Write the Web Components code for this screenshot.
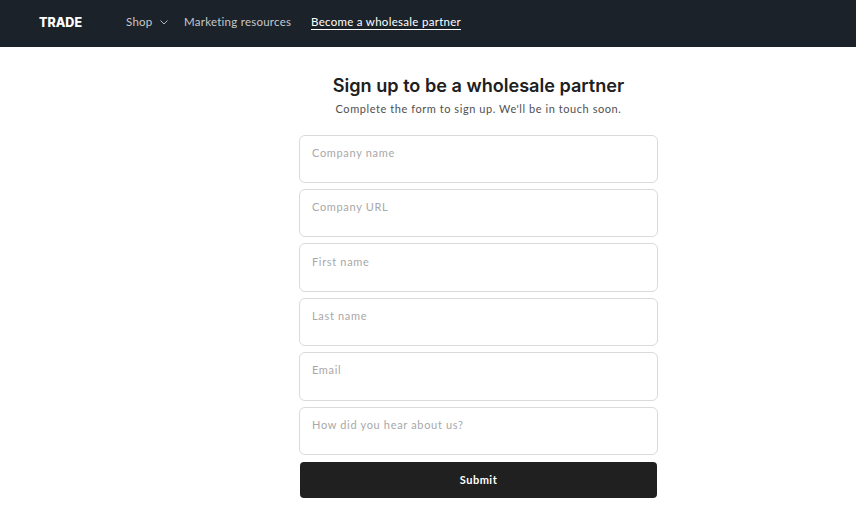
<!DOCTYPE html>
<html>
<head>
<meta charset="utf-8">
<title>Trade</title>
<style>
    html, body { margin: 0; padding: 0; background: #fff; }
    body { font-family: "Lato", "Liberation Sans", sans-serif; color: #202020; }
</style>
</head>
<body>
<trade-header></trade-header>
<signup-form></signup-form>

<script>
class TradeHeader extends HTMLElement {
    constructor() {
        super();
        this.attachShadow({ mode: 'open' });
    }

    connectedCallback() {
        this.shadowRoot.innerHTML = `
            <style>
                :host {
                    display: flex;
                    align-items: center;
                    box-sizing: border-box;
                    height: 47px;
                    padding-left: 39px;
                    padding-bottom: 2px;
                    background: #1c2229;
                    font-size: 11.5px;
                    letter-spacing: 0.25px;
                }
                .logo {
                    width: 87px;
                    color: #fff;
                    font-family: "Inter", sans-serif;
                    font-size: 12.5px;
                    font-weight: 800;
                    letter-spacing: 0;
                }
                nav { display: flex; align-items: baseline; }
                a { color: #c6c8ca; text-decoration: none; }
                .shop { display: flex; align-items: center; width: 58px; }
                .shop svg { margin-left: 7px; margin-top: 2px; }
                .market { width: 127px; }
                .current {
                    color: #fff;
                    letter-spacing: 0.29px;
                    border-bottom: 1px solid #fff;
                    line-height: 13px;
                    padding-bottom: 1px;
                }
            </style>
            <span class="logo">TRADE</span>
            <nav>
                <a class="shop" href="#">Shop
                    <svg width="8" height="5" viewBox="0 0 8 5" fill="none" stroke="#c6c8ca" stroke-width="0.9"><path d="M0.5 0.5 L4 4 L7.5 0.5"/></svg>
                </a>
                <a class="market" href="#">Marketing resources</a>
                <a class="current" href="#">Become a wholesale partner</a>
            </nav>
        `;
    }
}

class SignupField extends HTMLElement {
    constructor() {
        super();
        this.attachShadow({ mode: 'open' });
    }

    connectedCallback() {
        this.shadowRoot.innerHTML = `
            <style>
                :host {
                    display: block;
                    box-sizing: border-box;
                    height: 48.4px;
                    padding: 9.2px 12px 0;
                    border: 1px solid #dadada;
                    border-radius: 6px;
                    background: #fff;
                    color: #a8a8a8;
                    font-size: 11px;
                    line-height: 15px;
                    letter-spacing: 0.67px;
                }
            </style>
            <slot></slot>
        `;
    }
}

class SignupForm extends HTMLElement {
    constructor() {
        super();
        this.attachShadow({ mode: 'open' });
    }

    connectedCallback() {
        const labels = ['Company name', 'Company URL', 'First name', 'Last name', 'Email', 'How did you hear about us?'];
        this.shadowRoot.innerHTML = `
            <style>
                :host {
                    display: flex;
                    flex-direction: column;
                    align-items: center;
                    padding-left: 101px;
                }
                h1 {
                    margin: 27px 0 0;
                    font-family: "Inter", sans-serif;
                    font-size: 18.1px;
                    line-height: 23px;
                    font-weight: 600;
                    color: #202020;
                }
                p {
                    margin: 4px 0 18.6px;
                    font-size: 11px;
                    line-height: 15px;
                    letter-spacing: 0.56px;
                    color: #505050;
                }
                .fields {
                    display: flex;
                    flex-direction: column;
                    gap: 6px;
                    width: 359px;
                }
                button {
                    display: block;
                    box-sizing: border-box;
                    height: 36px;
                    width: 357px;
                    margin: 1px 1px 0;
                    border: 0;
                    border-radius: 4px;
                    background: #202020;
                    color: #fff;
                    font: 700 11px "Lato", sans-serif;
                    letter-spacing: 0.5px;
                }
            </style>
            <h1>Sign up to be a wholesale partner</h1>
            <p>Complete the form to sign up. We'll be in touch soon.</p>
            <div class="fields">
                ${labels.map(l => `<signup-field>${l}</signup-field>`).join('')}
                <button>Submit</button>
            </div>
        `;
    }
}

customElements.define('trade-header', TradeHeader);
customElements.define('signup-field', SignupField);
customElements.define('signup-form', SignupForm);
</script>
</body>
</html>
